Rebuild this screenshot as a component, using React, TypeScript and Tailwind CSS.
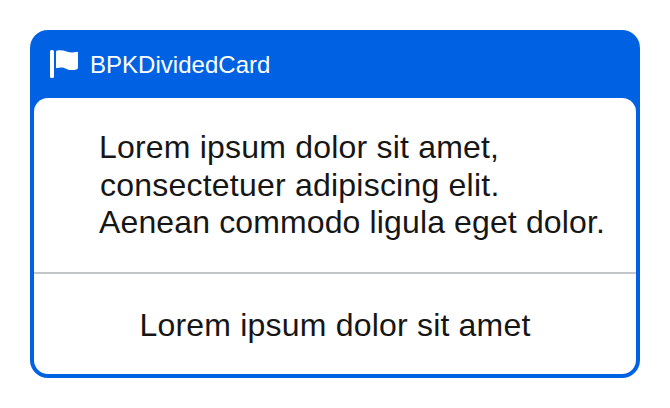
export default function App() {
  return (
    <main className="h-[408px] w-[670px] bg-white p-[30px] font-['Liberation_Sans',Arial,sans-serif]">
      <section className="flex h-[348px] w-[610px] flex-col rounded-[18px] bg-[#0062e3] p-1">
        <header className="flex h-16 items-start pt-4 pl-4 text-white">
          <svg className="h-7 w-7" viewBox="0 0 28 28" fill="currentColor" aria-hidden="true">
            <rect x="0" y="0" width="4" height="28" rx="1.5" />
            <path d="M6 1.800Q6 .7 7.200.4C10.500-.1 13.500.2 16.500 1.400C19.500 2.500 22.500 2.700 26.500 1.900Q28 1.500 28 2.500V17.800Q28 18.800 27 19.200C23 20.600 19.500 20.300 16.500 18.900C13 17.300 10.500 17.200 7.200 18.100Q6 18.400 6 17.400Z" />
          </svg>
          <h1 className="ml-3 pt-px text-[24px] leading-7 tracking-[0.03px] whitespace-nowrap">
            BPKDividedCard
          </h1>
        </header>
        <div className="flex flex-1 flex-col overflow-hidden rounded-[14px] bg-white text-[32px] text-[#161616]">
          <p className="h-[174px] pt-[31px] pl-[66px] leading-[37.5px] whitespace-nowrap">
            <span className="-ml-px block tracking-[0.2px]">Lorem ipsum dolor sit amet,</span>
            <span className="block tracking-[0.22px]">consectetuer adipiscing elit.</span>
            <span className="-ml-px block tracking-[0.13px]">Aenean commodo ligula eget dolor.</span>
          </p>
          <div className="flex flex-1 items-center justify-center border-t-2 border-[#c1c7c9] pt-0.5">
            <p className="tracking-[0.2px] whitespace-nowrap">Lorem ipsum dolor sit amet</p>
          </div>
        </div>
      </section>
    </main>
  );
}
